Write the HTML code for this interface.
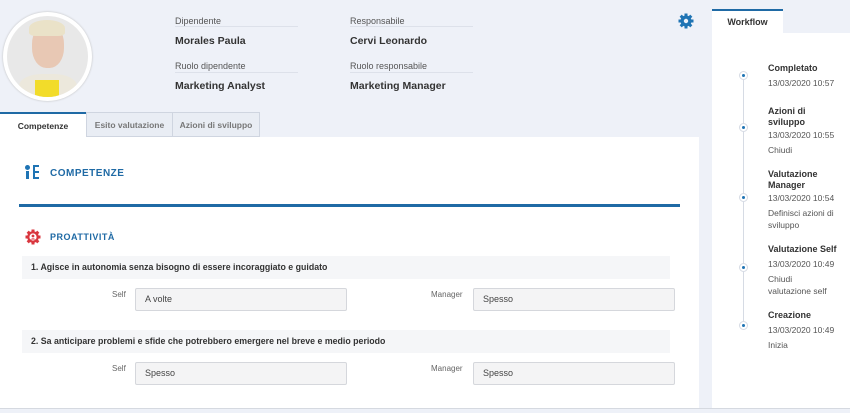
<!DOCTYPE html>
<html><head><meta charset="utf-8"><style>
*{margin:0;padding:0;box-sizing:border-box}
body{width:850px;height:413px;background:#eef1f8;font-family:"Liberation Sans",sans-serif;position:relative;overflow:hidden;color:#333}
.a{position:absolute}
.lbl{font-size:9px;color:#555}
.val{font-size:10.5px;font-weight:bold;color:#333}
.ln{height:1px;background:#dde1ea}
.tab{position:absolute;top:112px;height:25px;font-size:8.5px;font-weight:bold;color:#777;border:1px solid #cfd5e0;background:#e9edf4;text-align:center;line-height:25px}
.q{position:absolute;left:22px;width:648px;height:23px;background:#f5f6f8;font-size:8.8px;font-weight:bold;line-height:23px;padding-left:9px;color:#333}
.in{position:absolute;width:212px;height:23px;background:#f4f4f5;border:1px solid #d5d7dc;border-radius:2px;font-size:9px;line-height:21px;padding-left:9px;color:#444}
.sl{position:absolute;font-size:8px;color:#666}
.wt{position:absolute;left:768px;font-size:9px;font-weight:bold;color:#333;line-height:11px}
.wd{position:absolute;left:768px;font-size:8.5px;color:#555;line-height:12px}
.dot{position:absolute;left:739px;width:9px;height:9px;border-radius:50%;background:#fff;border:1px solid #d6dbe4}
.dot:after{content:"";position:absolute;left:2px;top:2px;width:3px;height:3px;border-radius:50%;background:#1f74b4}
</style></head><body>
<div class="a" style="left:3px;top:12px;width:89px;height:89px;border-radius:50%;background:#fff;box-shadow:0 0 2px #bbb"></div>
<div class="a" style="left:7px;top:16px;width:81px;height:81px;border-radius:50%;background:#e8e8e8;overflow:hidden">
 <div class="a" style="left:25px;top:8px;width:32px;height:44px;border-radius:45%;background:#e8c8b4"></div>
 <div class="a" style="left:22px;top:4px;width:36px;height:16px;border-radius:50% 50% 20% 20%;background:#eae2c8"></div>
 <div class="a" style="left:12px;top:58px;width:58px;height:30px;border-radius:40% 40% 0 0;background:#ece8dc"></div>
 <div class="a" style="left:28px;top:64px;width:24px;height:20px;background:#f2dc2a"></div>
</div>
<div class="a lbl" style="left:175px;top:16px">Dipendente</div>
<div class="a ln" style="left:175px;top:26px;width:123px"></div>
<div class="a val" style="left:175px;top:35px">Morales Paula</div>
<div class="a lbl" style="left:175px;top:61px">Ruolo dipendente</div>
<div class="a ln" style="left:175px;top:72px;width:123px"></div>
<div class="a val" style="left:175px;top:80px">Marketing Analyst</div>
<div class="a lbl" style="left:350px;top:16px">Responsabile</div>
<div class="a ln" style="left:350px;top:26px;width:123px"></div>
<div class="a val" style="left:350px;top:35px">Cervi Leonardo</div>
<div class="a lbl" style="left:350px;top:61px">Ruolo responsabile</div>
<div class="a ln" style="left:350px;top:72px;width:123px"></div>
<div class="a val" style="left:350px;top:80px">Marketing Manager</div>
<svg class="a" style="left:678px;top:13px" width="16" height="16" viewBox="0 0 16 16"><g fill="#1f74b4"><rect x="6.5" y="0.5" width="3" height="15"/><rect x="0.5" y="6.5" width="15" height="3"/><rect x="6.5" y="0.5" width="3" height="15" transform="rotate(45 8 8)"/><rect x="6.5" y="0.5" width="3" height="15" transform="rotate(-45 8 8)"/><circle cx="8" cy="8" r="5.5"/></g><circle cx="8" cy="8" r="2.2" fill="#eef1f8"/></svg>

<div class="a" style="left:0;top:137px;width:699px;height:271px;background:#fff"></div>
<div class="tab" style="left:0;width:86px;background:#fff;border:none;border-top:2px solid #1f6aa5;color:#333">Competenze</div>
<div class="tab" style="left:86px;width:87px">Esito valutazione</div>
<div class="tab" style="left:172px;width:88px">Azioni di sviluppo</div>

<div class="a" style="left:25px;top:165px;width:5px;height:5px;border-radius:50%;background:#1f74b4"></div>
<div class="a" style="left:26px;top:171px;width:3px;height:8px;background:#1f74b4"></div>
<div class="a" style="left:33px;top:165px;width:6px;height:14px;border:2px solid #1f74b4;border-right:none"></div>
<div class="a" style="left:35px;top:171px;width:4px;height:2px;background:#1f74b4"></div>
<div class="a" style="left:50px;top:168px;font-size:10px;font-weight:bold;color:#1f6aa5;letter-spacing:.5px">COMPETENZE</div>
<div class="a" style="left:19px;top:204px;width:661px;height:3px;background:#1f6aa5"></div>
<svg class="a" style="left:25px;top:229px" width="16" height="16" viewBox="0 0 16 16"><g fill="#d9363e"><rect x="6.5" y="0.5" width="3" height="15"/><rect x="0.5" y="6.5" width="15" height="3"/><rect x="6.5" y="0.5" width="3" height="15" transform="rotate(45 8 8)"/><rect x="6.5" y="0.5" width="3" height="15" transform="rotate(-45 8 8)"/><circle cx="8" cy="8" r="5.8"/></g><circle cx="8" cy="8" r="3.6" fill="#fff"/><circle cx="8" cy="7" r="1.4" fill="#d9363e"/><path d="M5.3 10.5 Q8 8 10.7 10.5Z" fill="#d9363e"/></svg>
<div class="a" style="left:50px;top:232px;font-size:9px;font-weight:bold;color:#1f6aa5;letter-spacing:.5px">PROATTIVITÀ</div>

<div class="q" style="top:256px">1. Agisce in autonomia senza bisogno di essere incoraggiato e guidato</div>
<div class="sl" style="left:112px;top:290px">Self</div>
<div class="in" style="left:135px;top:288px">A volte</div>
<div class="sl" style="left:431px;top:290px">Manager</div>
<div class="in" style="left:473px;top:288px;width:202px">Spesso</div>
<div class="q" style="top:330px">2. Sa anticipare problemi e sfide che potrebbero emergere nel breve e medio periodo</div>
<div class="sl" style="left:112px;top:364px">Self</div>
<div class="in" style="left:135px;top:362px">Spesso</div>
<div class="sl" style="left:431px;top:364px">Manager</div>
<div class="in" style="left:473px;top:362px;width:202px">Spesso</div>
<div class="a" style="left:0;top:408px;width:850px;height:1px;background:#d5d9e0"></div>

<div class="a" style="left:712px;top:33px;width:138px;height:375px;background:#fff"></div>
<div class="a" style="left:712px;top:9px;width:71px;height:25px;background:#fff;border-top:2px solid #1f6aa5;font-size:9px;font-weight:bold;text-align:center;line-height:23px">Workflow</div>
<div class="a" style="left:743px;top:75px;width:1px;height:252px;background:#d6dbe4"></div>
<div class="dot" style="top:71px"></div>
<div class="wt" style="top:63px">Completato</div>
<div class="wd" style="top:77px">13/03/2020 10:57</div>
<div class="dot" style="top:123px"></div>
<div class="wt" style="top:106px">Azioni di<br>sviluppo</div>
<div class="wd" style="top:129px">13/03/2020 10:55</div>
<div class="wd" style="top:144px">Chiudi</div>
<div class="dot" style="top:193px"></div>
<div class="wt" style="top:169px">Valutazione<br>Manager</div>
<div class="wd" style="top:192px">13/03/2020 10:54</div>
<div class="wd" style="top:207px">Definisci azioni di<br>sviluppo</div>
<div class="dot" style="top:263px"></div>
<div class="wt" style="top:244px">Valutazione Self</div>
<div class="wd" style="top:258px">13/03/2020 10:49</div>
<div class="wd" style="top:273px">Chiudi<br>valutazione self</div>
<div class="dot" style="top:321px"></div>
<div class="wt" style="top:310px">Creazione</div>
<div class="wd" style="top:324px">13/03/2020 10:49</div>
<div class="wd" style="top:339px">Inizia</div>
</body></html>
